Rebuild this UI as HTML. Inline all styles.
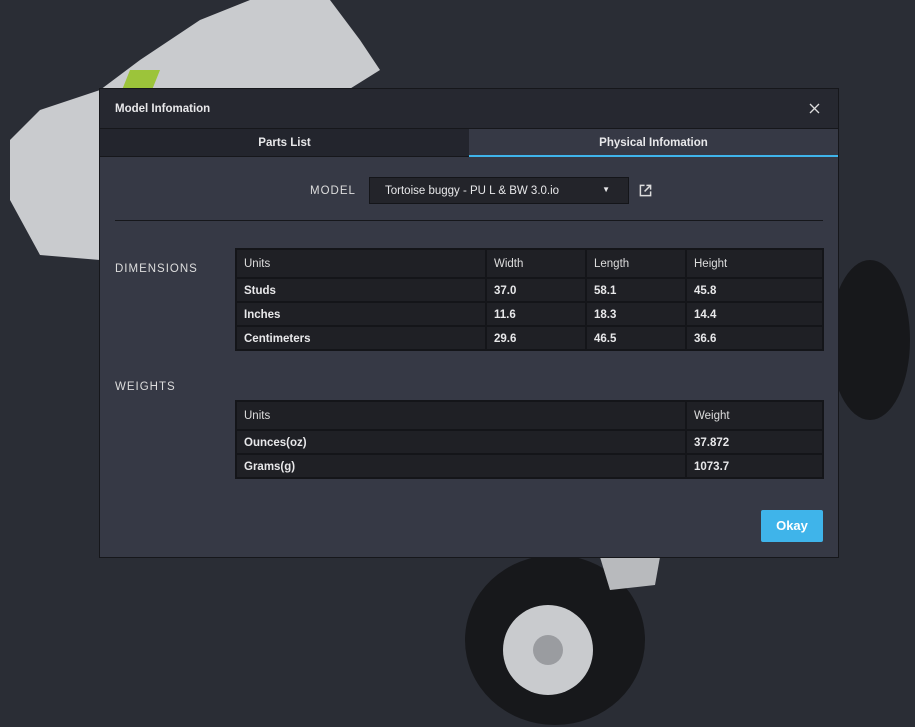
<!DOCTYPE html>
<html><head><style>
*{margin:0;padding:0;box-sizing:border-box}
body{width:915px;height:727px;background:#2a2d35;font-family:"Liberation Sans",sans-serif;position:relative;overflow:hidden;color:#e8e8ea}
.a{position:absolute}
.dlg{left:99px;top:88px;width:740px;height:470px;background:#363945;border:1px solid #16171b}
.hdr{left:0;top:0;width:738px;height:40px;background:#262830;border-bottom:1px solid #16171b;font-size:11.5px;font-weight:bold;padding:14px 15px}
.tab{top:40px;height:28px;font-size:11.5px;font-weight:bold;text-align:center;line-height:29px}
table{position:absolute;border-collapse:collapse;font-size:11.5px;background:#1f2025}
td{border:2px solid #141519;padding:1px 7px 0;height:24px}
tr.h td{height:29px;font-weight:normal;color:#ddd}
tr.r td{font-weight:bold}
.lbl{font-size:11.5px;letter-spacing:1px;color:#ddd}
</style></head><body>
<svg class="a" style="left:0;top:0" width="915" height="727">
<polygon points="10,140 40,110 100,90 140,60 200,20 250,0 330,0 360,40 380,70 300,120 200,150 120,200 100,260 40,255 10,200" fill="#c9cbce"/>
<polygon points="130,70 160,70 150,95 120,95" fill="#9cc43a"/>
<ellipse cx="555" cy="640" rx="90" ry="85" fill="#17181b"/>
<circle cx="548" cy="650" r="45" fill="#c9cbce"/>
<circle cx="548" cy="650" r="15" fill="#9a9ca0"/>
<polygon points="600,557 660,557 655,585 610,590" fill="#b8babd"/>
<ellipse cx="870" cy="340" rx="40" ry="80" fill="#17181b"/>
</svg>
<div class="a dlg">
 <div class="a hdr">Model Infomation</div>
 <svg class="a" style="right:18px;top:14px" width="11" height="11" viewBox="0 0 11 11"><path d="M1 1L10 10M10 1L1 10" stroke="#ddd" stroke-width="1.3"/></svg>
 <div class="a tab" style="left:0;width:369px;background:#23252d;border-bottom:1px solid #16171b">Parts List</div>
 <div class="a tab" style="left:369px;width:369px;background:#363945;border-bottom:2px solid #3fb4ea">Physical Infomation</div>
 <div class="a lbl" style="left:210px;top:96px">MODEL</div>
 <div class="a" style="left:269px;top:88px;width:260px;height:27px;background:#23242a;border:1px solid #141519;font-size:11.5px;padding:7px 15px">Tortoise buggy - PU L &amp; BW 3.0.io<span class="a" style="right:18px;top:7px;font-size:8px">▼</span></div>
 <svg class="a" style="left:539px;top:95px" width="13" height="13" viewBox="0 0 14 14"><path d="M6 1.5H1.5V12.5H12.5V8M8 1.5H12.5V6M12.5 1.5L6 8" stroke="#ddd" stroke-width="1.6" fill="none"/></svg>
 <div class="a" style="left:15px;top:131px;width:708px;height:1px;background:#16171b"></div>
 <div class="a lbl" style="left:15px;top:174px">DIMENSIONS</div>
 <table style="left:135px;top:159px;width:589px">
  <tr class="h"><td style="width:250px">Units</td><td style="width:100px">Width</td><td style="width:100px">Length</td><td>Height</td></tr>
  <tr class="r"><td>Studs</td><td>37.0</td><td>58.1</td><td>45.8</td></tr>
  <tr class="r"><td>Inches</td><td>11.6</td><td>18.3</td><td>14.4</td></tr>
  <tr class="r"><td>Centimeters</td><td>29.6</td><td>46.5</td><td>36.6</td></tr>
 </table>
 <div class="a lbl" style="left:15px;top:292px">WEIGHTS</div>
 <table style="left:135px;top:311px;width:589px">
  <tr class="h"><td style="width:450px">Units</td><td>Weight</td></tr>
  <tr class="r"><td>Ounces(oz)</td><td>37.872</td></tr>
  <tr class="r"><td>Grams(g)</td><td>1073.7</td></tr>
 </table>
 <div class="a" style="left:661px;top:421px;width:62px;height:32px;background:#3fb4ea;border-radius:2px;font-size:13px;font-weight:bold;text-align:center;line-height:32px;color:#fff">Okay</div>
</div>
</body></html>
